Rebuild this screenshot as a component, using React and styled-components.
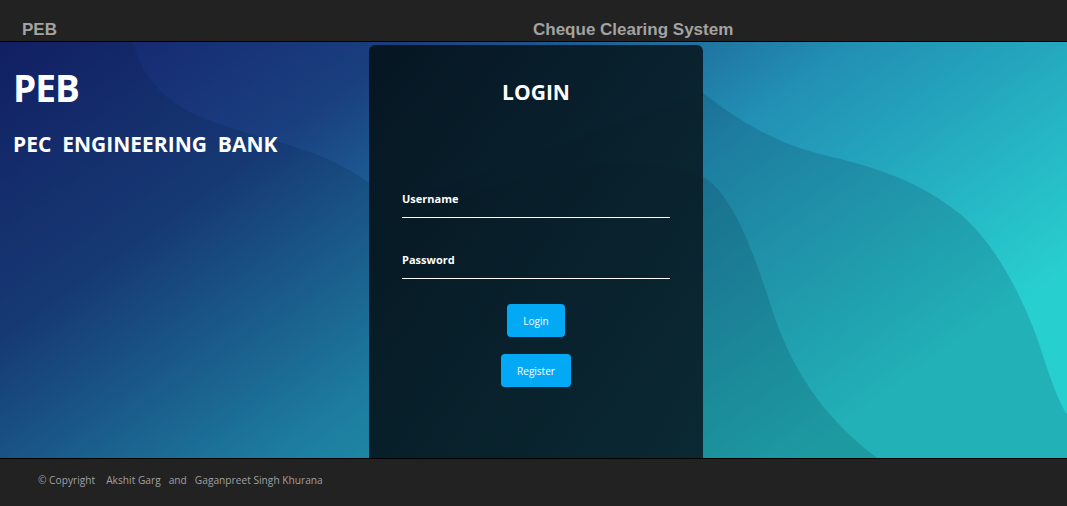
import React from 'react';
import styled, { createGlobalStyle } from 'styled-components';

const GlobalStyle = createGlobalStyle`
  html, body {
    margin: 0;
    padding: 0;
    height: 100%;
    background: #222;
  }

  #root {
    height: 100%;
  }

  * {
    box-sizing: border-box;
  }
`;

const Page = styled.div`
  display: flex;
  flex-direction: column;
  height: 100vh;
  overflow: hidden;
`;

// top bar with the short name and the system title
const Header = styled.header`
  display: grid;
  grid-template-columns: 511px auto;
  height: 42px;
  padding: 21px 0 0 22px;
  background: #222222;
  border-bottom: 1px solid #000;
  font-family: 'Liberation Sans', Arial, sans-serif;
  font-weight: 700;
  font-size: 17px;
  line-height: 18px;
  color: #a3a3a3;
`;

const Main = styled.main`
  position: relative;
  flex: 1;
  display: grid;
  grid-template-columns: 369px 334px 1fr;
  overflow: hidden;
`;

const Waves = styled.svg`
  position: absolute;
  inset: 0;
  width: 100%;
  height: 100%;
  z-index: 0;
`;

const Brand = styled.div`
  position: relative;
  z-index: 1;
  padding: 24px 0 0 13px;
  color: #fff;
  font-family: 'Open Sans', 'Noto Sans', sans-serif;
  font-weight: 700;
`;

const BrandShort = styled.h1`
  margin: 0;
  font-size: 37px;
  line-height: 44px;
  font-weight: 700;
  letter-spacing: -1px;
`;

const BrandLong = styled.h2`
  margin: 19px 0 0;
  font-size: 21px;
  line-height: 30px;
  font-weight: 700;
  white-space: pre;
`;

const Card = styled.section`
  position: relative;
  z-index: 1;
  margin-top: 3px;
  padding: 32px 33px 0;
  display: flex;
  flex-direction: column;
  border-radius: 6px 6px 0 0;
  background: linear-gradient(115deg, rgba(4, 19, 27, 0.92), rgba(9, 30, 40, 0.9));
  font-family: 'Open Sans', 'Noto Sans', sans-serif;
  color: #fff;
`;

const Title = styled.h3`
  margin: 0;
  text-align: center;
  font-size: 21px;
  line-height: 30px;
  font-weight: 700;
`;

const Field = styled.div`
  margin-top: ${({ $gap }) => $gap}px;
  display: flex;
  flex-direction: column;
`;

const Label = styled.label`
  font-size: 11px;
  line-height: 15px;
  font-weight: 700;
`;

const Input = styled.input`
  height: 12px;
  padding: 0;
  border: none;
  border-bottom: 1px solid #fff;
  background: transparent;
  color: #fff;
  outline: none;
`;

const Actions = styled.div`
  margin-top: 25px;
  display: flex;
  flex-direction: column;
  align-items: center;
  gap: 17px;
`;

const Button = styled.button`
  height: 33px;
  padding: 0 16px;
  border: none;
  border-radius: 4px;
  background: #03a9f4;
  color: #fff;
  font-family: 'Open Sans', 'Noto Sans', sans-serif;
  font-size: 10px;
  cursor: pointer;
`;

const Footer = styled.footer`
  display: flex;
  align-items: center;
  height: 48px;
  padding: 0 0 5px 38px;
  background: #222222;
  border-top: 1px solid #000;
  font-family: 'Open Sans', 'Noto Sans', sans-serif;
  font-size: 10.2px;
  color: #a0a0a0;
`;

const Credit = styled.span`
  margin-left: ${({ $gap }) => $gap || 0}px;
`;

const App = () => (
  <>
    <GlobalStyle />
    <Page>
      <Header>
        <span>PEB</span>
        <span>Cheque Clearing System</span>
      </Header>

      <Main>
        <Waves viewBox="0 0 1067 416" preserveAspectRatio="none">
          <defs>
            <linearGradient id="bg" x1="0" y1="0" x2="1" y2="0.55">
              <stop offset="0" stopColor="#14216b" />
              <stop offset="0.3" stopColor="#1a4080" />
              <stop offset="0.62" stopColor="#2290b4" />
              <stop offset="1" stopColor="#28cfcf" />
            </linearGradient>
          </defs>
          <rect width="1067" height="416" fill="url(#bg)" />
          <path
            d="M0,0 L133,0 C140,30 160,55 190,70 C230,90 290,100 330,118 C360,132 380,150 400,160 L703,51 C730,72 770,100 820,112 C880,126 920,140 960,172 C1000,205 1030,270 1045,320 C1055,350 1062,365 1067,372 L1067,416 L0,416 Z"
            fill="#061a3a"
            opacity="0.16"
          />
          <path
            d="M369,416 L369,200 C500,120 650,110 703,135 C730,150 750,200 768,255 C785,310 810,365 877,416 Z"
            fill="#041c30"
            opacity="0.16"
          />
        </Waves>

        <Brand>
          <BrandShort>PEB</BrandShort>
          <BrandLong>{'PEC  ENGINEERING  BANK'}</BrandLong>
        </Brand>

        <Card>
          <Title>LOGIN</Title>
          <Field $gap={84}>
            <Label htmlFor="username">Username</Label>
            <Input id="username" type="text" />
          </Field>
          <Field $gap={34}>
            <Label htmlFor="password">Password</Label>
            <Input id="password" type="password" />
          </Field>
          <Actions>
            <Button>Login</Button>
            <Button>Register</Button>
          </Actions>
        </Card>
      </Main>

      <Footer>
        <Credit>© Copyright</Credit>
        <Credit $gap={11}>Akshit Garg</Credit>
        <Credit $gap={8}>and</Credit>
        <Credit $gap={8}>Gaganpreet Singh Khurana</Credit>
      </Footer>
    </Page>
  </>
);

export default App;
